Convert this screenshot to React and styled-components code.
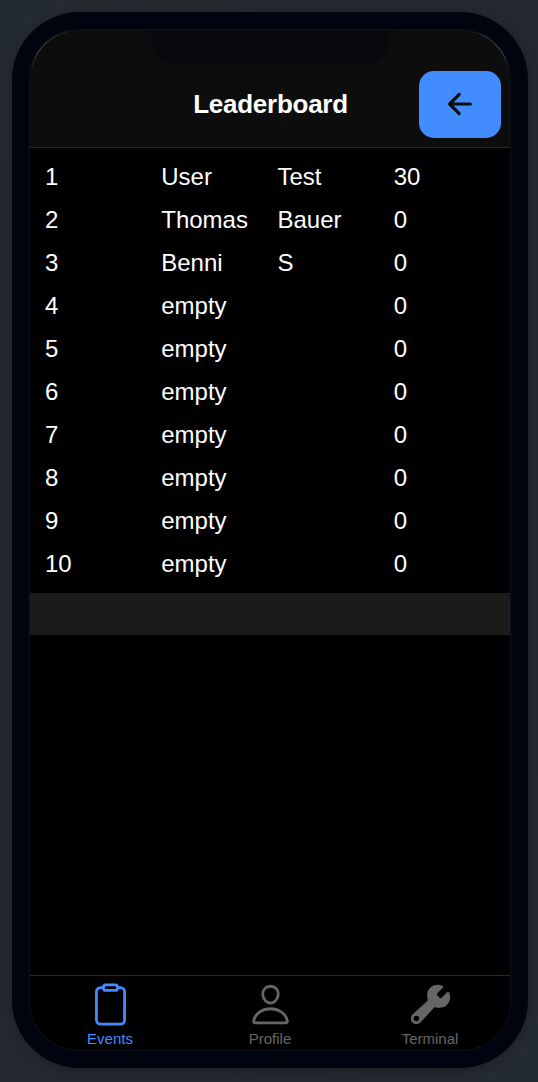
import React from "react";
import styled, { createGlobalStyle } from "styled-components";
import { IoArrowBack, IoBuild, IoClipboardOutline, IoPersonOutline } from "react-icons/io5";

const GlobalStyle = createGlobalStyle`
  * { box-sizing: border-box; }
  html, body { margin: 0; padding: 0; }
  body {
    background: #23282f;
    color: #fff;
    font-family: "Liberation Sans", Arial, sans-serif;
  }
`;

const Page = styled.div`
  width: 538px;
  height: 1082px;
  padding: 12px 10px 14px 12px;
  overflow: hidden;
  background: linear-gradient(135deg, #232b31 0%, #252830 20%, #252830 80%, #232b31 100%);
`;

const Phone = styled.div`
  width: 516px;
  height: 1056px;
  padding: 17px;
  border-radius: 68px;
  background: #00040f;
  box-shadow: 0 2px 10px rgba(20, 22, 26, 0.5);
`;

const Screen = styled.div`
  position: relative;
  display: flex;
  flex-direction: column;
  height: 100%;
  border: 1px solid #0e121b;
  border-radius: 49px;
  background: #000;
  overflow: hidden;
`;

const CornerGlint = styled.div`
  position: absolute;
  top: 0;
  ${({ $side }) => $side}: 0;
  width: 48px;
  height: 48px;
  border: 0 solid #4a4c4d;
  border-top-width: 1px;
  border-${({ $side }) => $side}-width: 1px;
  border-top-${({ $side }) => $side}-radius: 48px;
  mask-image: linear-gradient(
    ${({ $side }) => ($side === "left" ? "45deg" : "-45deg")},
    transparent 8%, #000 30%, #000 70%, transparent 92%
  );
`;

const Notch = styled.div`
  position: absolute;
  top: 0;
  left: 50%;
  width: 236px;
  height: 35px;
  transform: translateX(-50%);
  border-radius: 0 0 24px 24px;
  background: #07090e;

  &::before,
  &::after {
    content: "";
    position: absolute;
    top: 0;
    width: 6px;
    height: 6px;
  }
  &::before {
    right: 100%;
    background: radial-gradient(circle at 0 100%, transparent 6px, #07090e 6px);
  }
  &::after {
    left: 100%;
    background: radial-gradient(circle at 100% 100%, transparent 6px, #07090e 6px);
  }
`;

const Header = styled.header`
  display: grid;
  grid-template-columns: 91px 1fr 91px;
  align-items: center;
  height: 118px;
  padding-top: 31px;
  border-bottom: 1px solid #292929;
  background: #0d0d0d;
`;

const Title = styled.h1`
  grid-column: 2;
  margin: 0;
  padding-left: 1px;
  text-align: center;
  font-size: 26px;
  font-weight: 700;
  line-height: 30px;
  letter-spacing: -0.25px;
`;

const BackButton = styled.button`
  display: flex;
  align-items: center;
  justify-content: center;
  width: 82px;
  height: 67px;
  padding: 0;
  border: 0;
  border-radius: 15px;
  background: #428cff;
  color: #0d0d0d;
  font-size: 34px;
`;

const Content = styled.main`
  flex: 1;
`;

const Ranking = styled.div`
  padding: 7.5px;
`;

const Row = styled.div`
  display: grid;
  grid-template-columns: repeat(4, 1fr);
  height: 43px;
  align-items: center;
`;

const Cell = styled.span`
  padding: 0 7.5px;
  font-size: 24px;
  line-height: 28px;
`;

const Band = styled.div`
  height: 42px;
  background: #1b1b1b;
`;

const TabBar = styled.nav`
  display: grid;
  grid-template-columns: repeat(3, 1fr);
  height: 75px;
  border-top: 1px solid #292929;
`;

const Tab = styled.div`
  display: flex;
  flex-direction: column;
  align-items: center;
  padding-top: 6px;
  color: ${({ $active }) => ($active ? "#428cff" : "#666")};

  svg { width: 45px; height: 45px; }
`;

const TabLabel = styled.span`
  font-size: 15px;
  line-height: 18px;
  margin-top: 3px;
`;

const players = [
  ["User", "Test", 30],
  ["Thomas", "Bauer", 0],
  ["Benni", "S", 0],
  ...Array.from({ length: 7 }, () => ["empty", "", 0]),
];

const tabs = [
  { label: "Events", Icon: IoClipboardOutline, active: true },
  { label: "Profile", Icon: IoPersonOutline },
  { label: "Terminal", Icon: IoBuild },
];

export default function App() {
  return (
    <>
      <GlobalStyle />
      <Page>
        <Phone>
          <Screen>
            <Header>
              <Title>Leaderboard</Title>
              <BackButton aria-label="Back"><IoArrowBack /></BackButton>
            </Header>
            <Notch />
            <CornerGlint $side="left" />
            <CornerGlint $side="right" />
            <Content>
              <Ranking>
                {players.map(([first, last, points], i) => (
                  <Row key={i}>
                    <Cell>{i + 1}</Cell>
                    <Cell>{first}</Cell>
                    <Cell>{last}</Cell>
                    <Cell>{points}</Cell>
                  </Row>
                ))}
              </Ranking>
              <Band />
            </Content>
            <TabBar>
              {tabs.map(({ label, Icon, active }) => (
                <Tab key={label} $active={active}>
                  <Icon />
                  <TabLabel>{label}</TabLabel>
                </Tab>
              ))}
            </TabBar>
          </Screen>
        </Phone>
      </Page>
    </>
  );
}
